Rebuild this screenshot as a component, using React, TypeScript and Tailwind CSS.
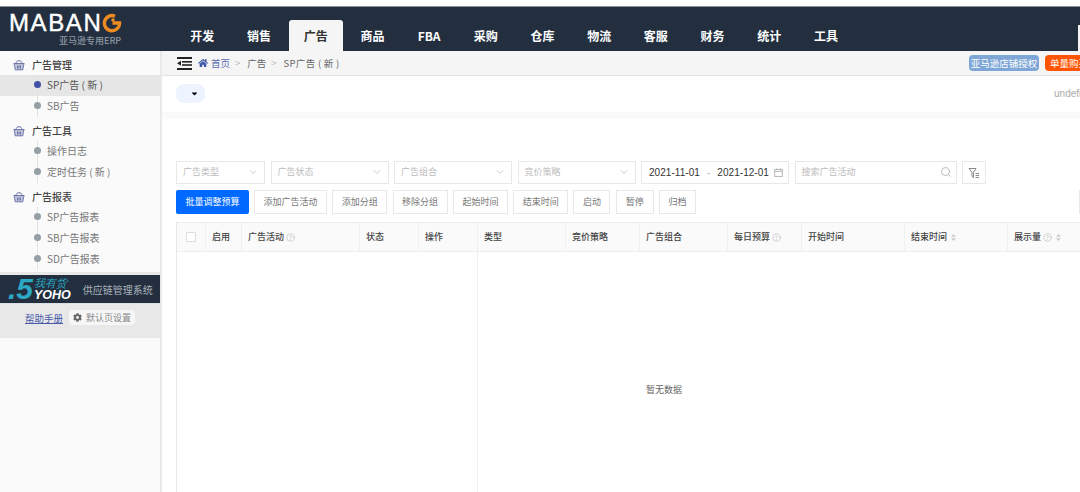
import { ChevronDown, Search, CircleHelp } from "lucide-react";
import { FaCog, FaHome, FaCaretDown } from "react-icons/fa";

const tabs = ["开发", "销售", "广告", "商品", "FBA", "采购", "仓库", "物流", "客服", "财务", "统计", "工具"];

const menu = [
  { title: "广告管理", items: ["SP广告 ( 新 )", "SB广告"] },
  { title: "广告工具", items: ["操作日志", "定时任务 ( 新 )"] },
  { title: "广告报表", items: ["SP广告报表", "SB广告报表", "SD广告报表"] },
];

const actions = [
  { name: "添加广告活动", width: "w-[73px]" },
  { name: "添加分组", width: "w-[55px]" },
  { name: "移除分组", width: "w-[55px]" },
  { name: "起始时间", width: "w-[55px]" },
  { name: "结束时间", width: "w-[55px]" },
  { name: "启动", width: "w-[37px]" },
  { name: "暂停", width: "w-[38px]" },
  { name: "归档", width: "w-[37px]" },
];

const columns = [
  { name: "启用", width: "w-[36px]" },
  { name: "广告活动", width: "w-[118px]", help: true },
  { name: "状态", width: "w-[59px]" },
  { name: "操作", width: "w-[59px]" },
  { name: "类型", width: "w-[88px]" },
  { name: "竞价策略", width: "w-[74px]" },
  { name: "广告组合", width: "w-[88px]" },
  { name: "每日预算", width: "w-[74px]", help: true },
  { name: "开始时间", width: "w-[103px]" },
  { name: "结束时间", width: "w-[103px]", sort: true },
  { name: "展示量", width: "w-[103px]", help: true, sort: true },
];

const BasketIcon = () => (
  <svg className="h-[12px] w-[12px] shrink-0" viewBox="0 0 12 12" fill="none" stroke="#6a72a8" strokeWidth="1">
    <path d="M3 4.5 C3 0.8 9 0.8 9 4.5" />
    <path d="M0.5 4.8h11" strokeWidth="1.5" />
    <path d="M1.5 5.5 2.2 10.8h7.6l0.7-5.3" fill="#c9cce0" />
    <path d="M4.5 6.5v3M6 6.5v3M7.5 6.5v3" />
  </svg>
);

const IndentIcon = () => (
  <svg className="h-[13px] w-[15px]" viewBox="0 0 15 13" fill="#222">
    <rect x="0" y="0" width="15" height="2" />
    <rect x="5" y="4" width="10" height="1.6" />
    <rect x="5" y="7.2" width="10" height="1.6" />
    <path d="M4 3.8v5L0 6.3z" />
    <rect x="0" y="11" width="15" height="2" />
  </svg>
);

const FilterIcon = () => (
  <svg className="h-[12px] w-[12px]" viewBox="0 0 12 12" fill="none" stroke="#8a8a8a" strokeWidth="1">
    <path d="M1 1.5h7L5.5 5.5v5L4 9.5v-4z" />
    <path d="M7.5 6.5h3.5M7.5 8.5h3.5M7.5 10.5h3.5" />
  </svg>
);

const CalendarIcon = () => (
  <svg className="h-[9px] w-[9px]" viewBox="0 0 10 10" fill="none" stroke="#aaa" strokeWidth="0.9">
    <rect x="0.8" y="1.5" width="8.4" height="7.8" />
    <path d="M0.8 3.8h8.4M3 0.5v2M7 0.5v2" />
  </svg>
);

const SortIcon = () => (
  <svg className="ml-[2px] h-[7px] w-[5px]" viewBox="0 0 5 7" fill="#ccc">
    <path d="M2.5 0 5 2.8H0z" />
    <path d="M2.5 7 5 4.2H0z" />
  </svg>
);

function Logo() {
  return (
    <div className="flex w-[174px] shrink-0 flex-col pl-[9px] pt-[3px]">
      <div className="flex h-[26px] items-center">
        <span className="text-[24px] leading-none tracking-[1.6px] text-white [-webkit-text-stroke:0.4px_white] [font-family:'Liberation_Sans',sans-serif]">MABAN</span>
        <svg className="h-[20px] w-[20px]" viewBox="0 0 20 20" fill="none">
          <path d="M13 3.2 A7.6 7.6 0 1 0 17.6 10 H10.5" stroke="#ee8a22" strokeWidth="3.4" />
          <circle cx="11" cy="7" r="1.8" fill="#ee8a22" />
        </svg>
      </div>
      <div className="mt-[-2px] pl-[50px] text-[9px] font-medium leading-[13px] text-[#8d97a3]">亚马逊专用ERP</div>
    </div>
  );
}

function Sidebar() {
  return (
    <aside className="flex w-[162px] shrink-0 flex-col border-r-2 border-[#e8eaea] bg-[#fafafa]">
      <div className="flex flex-col gap-[3px] pt-[3px]">
        {menu.map((group) => (
          <div key={group.title}>
            <div className="flex h-[21px] items-center gap-[7px] pl-[13px] text-[10px] font-medium text-[#444]">
              <BasketIcon />
              {group.title}
            </div>
            {group.items.map((item) => {
              const active = item === "SP广告 ( 新 )";
              return (
                <div key={item} className={`relative flex h-[21px] items-center whitespace-pre pb-[2px] pl-[47px] text-[10px] ${active ? "bg-[#e6e6e6] text-[#555]" : "text-[#777]"}`}>
                  <span className="absolute bottom-0 left-[37px] top-0 w-px bg-[#e2e2e2]" />
                  <span className={`absolute left-[34px] top-[6px] h-[7px] w-[7px] rounded-full ${active ? "bg-[#3f51a5]" : "bg-[#95a0a6]"}`} />
                  {item}
                </div>
              );
            })}
          </div>
        ))}
      </div>
      <div className="mt-[2px] h-[3px] bg-[#e8e8e8]" />
      <div className="flex h-[28px] items-center bg-[#232f3f] pl-[8px]">
        <div className="flex items-center italic [font-family:'Liberation_Sans',sans-serif]">
          <span className="text-[30px] font-bold leading-[26px] text-[#2aa8c4]">.5</span>
          <span className="ml-[1px] flex flex-col">
            <span className="text-[11px] leading-[12px] text-[#2aa8c4]">我有货</span>
            <span className="text-[12.5px] font-bold leading-[12px] text-white">YOHO</span>
          </span>
        </div>
        <span className="ml-[12px] text-[10px] text-[#aab2bb]">供应链管理系统</span>
      </div>
      <div className="flex h-[35px] items-start gap-[6px] border-t border-[#d8dfe3] bg-[#e8e8e8] pl-[25px] pt-[6px]">
        <span className="text-[9.5px] leading-[16px] text-[#4a5aa8] underline">帮助手册</span>
        <span className="flex h-[15px] items-center gap-[4px] rounded-sm bg-[#f6f6f6] px-[4px] text-[9px] text-[#888]">
          <FaCog className="h-[9px] w-[9px] text-[#666]" />
          默认页设置
        </span>
      </div>
    </aside>
  );
}

function SelectBox({ label, width }: { label: string; width: string }) {
  return (
    <div className={`flex h-[23px] shrink-0 items-center justify-between border border-[#e8e8e8] pb-[1px] pl-[6px] pr-[5px] text-[9px] text-[#bbb] ${width}`}>
      {label}
      <ChevronDown className="h-[12px] w-[12px] text-[#aaa]" strokeWidth={1.2} />
    </div>
  );
}

export default function App() {
  return (
    <div className="h-[492px] w-[1080px] overflow-hidden bg-white [font-family:'Noto_Sans_CJK_SC','Noto_Sans',sans-serif]">
      <div className="h-[6px] bg-white" />
      <header className="flex h-[45px] items-end border-t border-[#8b9099] bg-[#232f3f]">
        <div className="self-start">
          <Logo />
        </div>
        <nav className="flex">
          {tabs.map((tab) => (
            <div key={tab} className="flex w-[56.7px] justify-center px-[1.5px]">
              <div className={`flex h-[31px] w-full items-center justify-center rounded-t-[3px] text-[12px] font-bold ${tab === "广告" ? "bg-[#f5f5f5] text-[#333]" : "text-white"}`}>{tab}</div>
            </div>
          ))}
        </nav>
        <div className="ml-auto h-[26px] w-[2px] bg-[#f5f5f5]" />
      </header>
      <div className="flex h-[441px]">
        <Sidebar />
        <main className="flex w-[918px] shrink-0 flex-col overflow-hidden">
          <div className="flex h-[25px] shrink-0 items-center whitespace-pre border-b border-[#e1e4e4] bg-[#f5f5f5] pl-[15px] text-[9.5px] text-[#666]">
            <IndentIcon />
            <FaHome className="ml-[6px] h-[10px] w-[10px] text-[#3f5aa8]" />
            <span className="ml-[3px] text-[#5a6bb0]">首页</span>
            <span className="ml-[5px] text-[#bbb]">&gt;</span>
            <span className="ml-[7px]">广告</span>
            <span className="ml-[5px] text-[#bbb]">&gt;</span>
            <span className="ml-[7px] tracking-[0.3px]">SP广告 ( 新 )</span>
            <span className="ml-auto flex h-[16px] w-[70px] shrink-0 items-center justify-center rounded-sm bg-[#7ea6d6] text-[9.5px] text-white">亚马逊店铺授权</span>
            <span className="ml-[6px] mr-[-25px] flex h-[16px] w-[60px] shrink-0 items-center rounded-sm bg-[#ff5500] pl-[5px] text-[9.5px] text-white">单量购买</span>
          </div>
          <div className="flex h-[36px] shrink-0 items-center justify-between pl-[14px]">
            <div className="mt-[-1px] flex h-[19px] w-[29px] items-center justify-end rounded-lg bg-[#eef4ff] pr-[6px]">
              <FaCaretDown className="h-[9px] w-[9px] text-black" />
            </div>
            <span className="mr-[-18px] text-[10px] leading-none text-[#aaa] [font-family:'Liberation_Sans',sans-serif]">undefined</span>
          </div>
          <div className="h-[7px] shrink-0 bg-[#fafafa]" />
          <div className="flex shrink-0 gap-[5.5px] pl-[14px] pt-[42px]">
            <SelectBox label="广告类型" width="w-[89px]" />
            <SelectBox label="广告状态" width="w-[118px]" />
            <SelectBox label="广告组合" width="w-[118px]" />
            <SelectBox label="竞价策略" width="w-[118px]" />
            <div className="flex h-[23px] w-[148px] shrink-0 items-center border border-[#e8e8e8] pb-[1px] pl-[7px] text-[10px] tracking-[0.05px] text-[#333] [font-family:'Liberation_Sans',sans-serif]">
              2021-11-01
              <span className="mx-[7px] text-[#bbb]">-</span>
              2021-12-01
              <span className="ml-[5px]"><CalendarIcon /></span>
            </div>
            <div className="flex h-[23px] w-[162px] shrink-0 items-center justify-between border border-[#e8e8e8] pb-[1px] pl-[6px] pr-[4px] text-[9px] text-[#bbb]">
              搜索广告活动
              <Search className="h-[12px] w-[12px] text-[#999]" strokeWidth={1.3} />
            </div>
            <div className="flex h-[23px] w-[24px] shrink-0 items-center justify-center border border-[#e8e8e8]">
              <FilterIcon />
            </div>
          </div>
          <div className="flex shrink-0 items-center pl-[14px] pt-[6px]">
            <button className="h-[24px] w-[73px] shrink-0 rounded-[2px] bg-[#0069ff] text-[9px] text-white">批量调整预算</button>
            <div className="ml-[5px] flex shrink-0 gap-[5.3px]">
              {actions.map((action) => (
                <button key={action.name} className={`h-[24px] shrink-0 border border-[#e8e8e8] text-[9px] text-[#777] ${action.width}`}>
                  {action.name}
                </button>
              ))}
            </div>
            <div className="ml-[383px] h-[24px] w-[8px] shrink-0 border border-[#e8e8e8]" />
          </div>
          <div className="ml-[14px] mt-[8px] flex min-h-0 flex-1 flex-col border-l border-[#e8e8e8]">
            <div className="flex h-[30px] shrink-0 border-b border-t border-[#eee] bg-[#fafafa] text-[9px] font-medium text-[#444]">
              <div className="flex w-[29px] shrink-0 items-center justify-center border-r border-[#f0f0f0]">
                <span className="h-[10px] w-[10px] rounded-[1px] border border-[#ddd] bg-white" />
              </div>
              {columns.map((col) => (
                <div key={col.name} className={`flex shrink-0 items-center gap-[2px] border-r border-[#f0f0f0] pl-[6px] ${col.width}`}>
                  {col.name}
                  {col.help ? <CircleHelp className="h-[9px] w-[9px] text-[#aaa]" strokeWidth={1.3} /> : null}
                  {col.sort ? <SortIcon /> : null}
                </div>
              ))}
            </div>
            <div className="flex min-h-0 flex-1">
              <div className="w-[301px] shrink-0 border-r border-[#eee]" />
              <div className="flex w-[372px] shrink-0 items-center justify-center pt-[36px] text-[9px] text-[#666]">暂无数据</div>
            </div>
          </div>
        </main>
      </div>
    </div>
  );
}
